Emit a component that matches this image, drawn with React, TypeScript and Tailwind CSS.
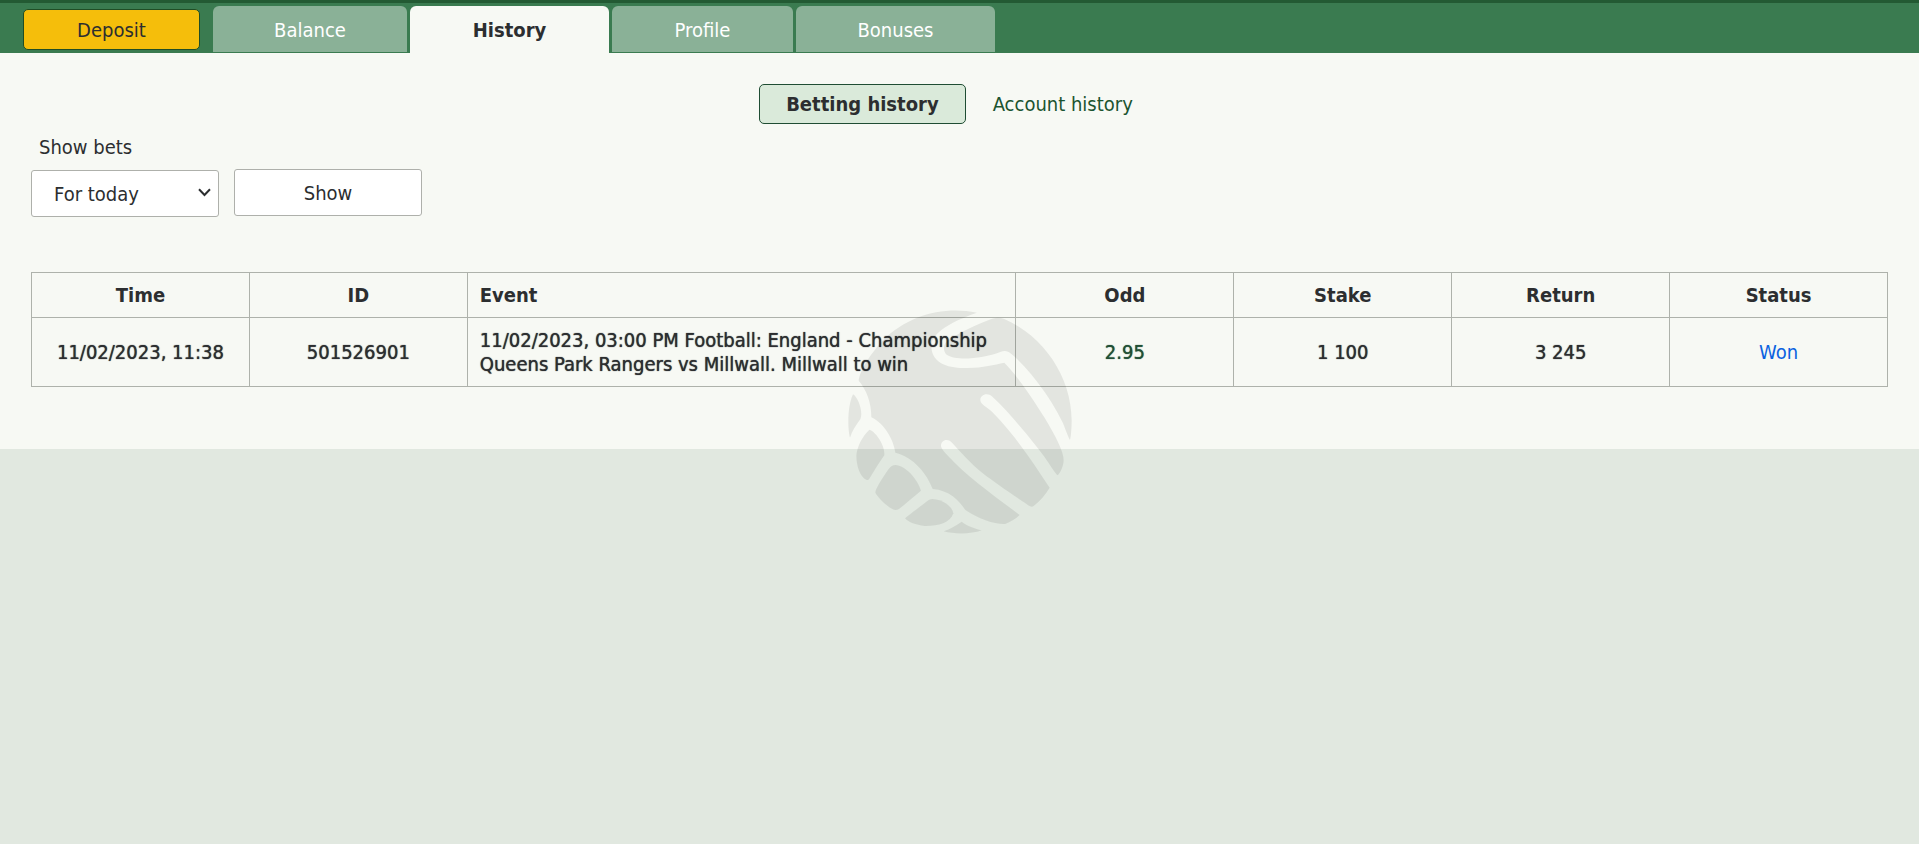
import React, { useState } from 'react'

type betType = {
  time: string
  id: string
  event: string[]
  odd: string
  stake: string
  win: string
  status: string
}

const bets: betType[] = [
  {
    time: '11/02/2023, 11:38',
    id: '501526901',
    event: [
      '11/02/2023, 03:00 PM Football: England - Championship',
      'Queens Park Rangers vs Millwall. Millwall to win',
    ],
    odd: '2.95',
    stake: '1 100',
    win: '3 245',
    status: 'Won',
  },
]

const tabs = [
  { name: 'Balance', width: 'w-[194px]' },
  { name: 'History', width: 'w-[199px]' },
  { name: 'Profile', width: 'w-[181px]' },
  { name: 'Bonuses', width: 'w-[199px]' },
]

const Header = () => {
  const [active, setActive] = useState('History')

  return (
    <header className="flex h-[53px] border-t-3 border-[#235a33] bg-[#3a7b50] pl-[23px]">
      <button className="mt-[6px] mr-[13px] h-[41px] w-[177px] rounded-[5px] border border-[#1f4d25] bg-[#f5be0b]">
        Deposit
      </button>
      <nav className="mt-[3px] flex gap-[3px]">
        {tabs.map((tab) => (
          <button
            key={tab.name}
            onClick={() => setActive(tab.name)}
            className={`${tab.width} rounded-t-md ${
              active === tab.name
                ? 'bg-[#f7f9f4] font-bold'
                : 'mb-px bg-[#8ab197] pt-px text-white'
            }`}
          >
            {tab.name}
          </button>
        ))}
      </nav>
    </header>
  )
}

const Filter = () => {
  return (
    <form className="mt-[9px]" onSubmit={(e) => e.preventDefault()}>
      <label htmlFor="period" className="block pl-[8px] leading-7">
        Show bets
      </label>
      <div className="mt-[8px] flex gap-[15px]">
        <div className="relative mt-px">
          <select
            id="period"
            className="h-[47px] w-[188px] appearance-none rounded-[3px] border border-[#aeb0ab] bg-white pl-[22px]"
          >
            <option>For today</option>
            <option>For week</option>
            <option>For month</option>
          </select>
          <svg
            className="pointer-events-none absolute top-[18px] right-[8px] h-[9px] w-[13px]"
            viewBox="0 0 13 9"
            fill="none"
            stroke="#2c2e30"
            strokeWidth="2"
          >
            <path d="M1 1.2l5.5 5.8 5.5-5.8" />
          </svg>
        </div>
        <button className="h-[47px] w-[188px] rounded-[3px] border border-[#aeb0ab] bg-white pt-px">Show</button>
      </div>
    </form>
  )
}

const BetsTable = () => {
  return (
    <table className="mt-[55px] w-full table-fixed border-collapse text-center [&_td]:border [&_td]:border-[#aeb2ab] [&_th]:border [&_th]:border-[#aeb2ab]">
      <thead>
        <tr className="h-[45px]">
          <th className="w-[11.74%]">Time</th>
          <th className="w-[11.74%]">ID</th>
          <th className="pl-[12px] text-left">Event</th>
          <th className="w-[11.74%]">Odd</th>
          <th className="w-[11.74%]">Stake</th>
          <th className="w-[11.74%]">Return</th>
          <th className="w-[11.74%]">Status</th>
        </tr>
      </thead>
      <tbody>
        {bets.map((bet) => (
          <tr key={bet.id} className="h-[69px] [text-shadow:0_0_1px_currentColor]">
            <td>{bet.time}</td>
            <td>{bet.id}</td>
            <td className="pl-[12px] text-left leading-6">
              {bet.event.map((line) => (
                <div key={line} className="whitespace-nowrap">{line}</div>
              ))}
            </td>
            <td className="text-[#214f35]">{bet.odd}</td>
            <td>{bet.stake}</td>
            <td>{bet.win}</td>
            <td className="text-[#0b62e0] [text-shadow:none]">{bet.status}</td>
          </tr>
        ))}
      </tbody>
    </table>
  )
}

// ball mark laid over the whole page
const Watermark = () => {
  return (
    <div className="pointer-events-none fixed inset-0 flex items-center justify-center">
      <svg className="h-[224px] w-[224px]" viewBox="83 60 672 672" fill="#000" fillOpacity="0.08">
        <path d="M470 68C350 110 333 145 333 170C336 225 390 234 440 234C490 233 520 224 552 218C590 255 640 330 672 382C705 437 730 485 730 510C730 528 720 548 712 556C705 552 690 525 672 500C630 445 570 370 516 320C500 305 480 315 480 330C480 342 500 352 515 365C580 430 630 505 688 593C675 615 658 634 640 648C637 651 633 651 629 649C610 636 540 590 490 552C450 520 420 485 395 458C380 443 362 452 362 468C363 480 385 498 400 515C460 575 540 630 598 675C585 688 570 696 555 702C530 705 475 688 435 660C417 632 385 600 337 597C322 555 280 500 225 488C220 450 192 400 153 382C153 335 138 300 115 272C117 245 150 190 190 149C265 75 370 48 470 68Z" />
        <path d="M515 86C530 82 540 83 552 87C670 138 753 260 754 390C754 415 752 440 749 450C745 445 738 425 728 400C690 318 620 230 572 191C562 182 552 181 540 186C490 205 410 214 380 195C368 185 368 165 378 155C410 130 470 103 515 86Z" />
        <path d="M98 313C112 320 130 365 120 388C108 405 95 423 89 443C82 420 80 350 98 313Z" />
        <path d="M147 419C168 425 196 470 192 496C175 520 160 545 148 565C145 570 142 571 139 570C118 560 108 525 108 497C110 470 125 440 147 419Z" />
        <path d="M225 525C255 525 292 568 302 602C280 620 255 642 236 657C230 660 223 661 216 657C195 645 173 622 165 608C165 598 185 565 205 537C211 529 217 525 225 525Z" />
        <path d="M337 627C365 628 396 648 399 670C390 700 350 709 313 708C285 705 265 697 254 685C275 668 305 645 325 630C329 628 333 627 337 627Z" />
        <path d="M424 695C440 708 465 716 484 721C455 733 400 733 370 724C390 717 405 708 424 695Z" />
      </svg>
    </div>
  )
}

const App = () => {
  return (
    <div className="min-h-screen bg-[#e1e8e0] font-['DejaVu_Sans_Condensed','Noto_Sans',sans-serif] text-xl text-[#2c2e30]">
      <Header />
      <main className="bg-[#f7f9f4] px-[31px] pt-[31px] pb-[62px]">
        <div className="flex h-[40px] items-center justify-center">
          <button className="h-full rounded-[5px] border border-[#1f4d33] bg-[#daeada] px-[26px] font-bold">
            Betting history
          </button>
          <a href="#" className="px-[27px] text-[#1b5430]">Account history</a>
        </div>
        <Filter />
        <BetsTable />
      </main>
      <Watermark />
    </div>
  )
}

export default App
